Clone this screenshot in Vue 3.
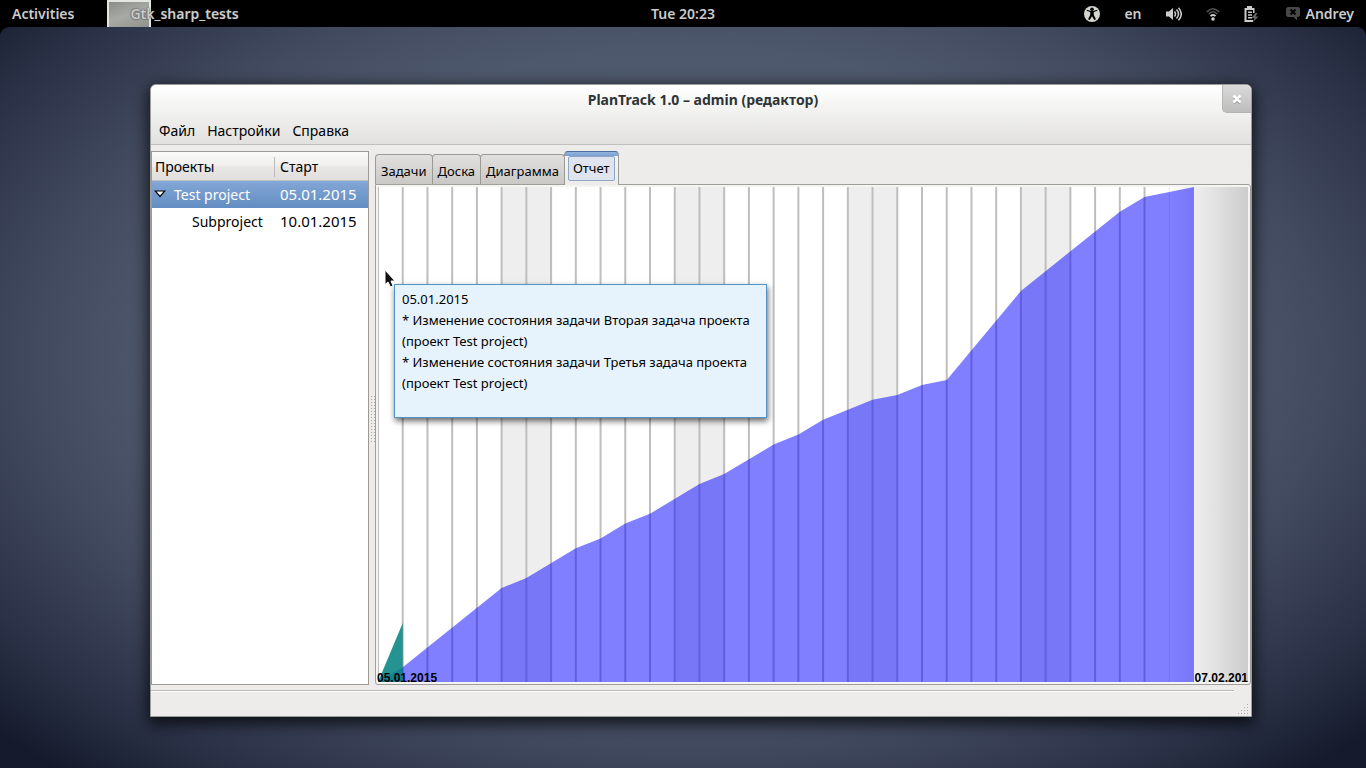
<script setup>
import { ref } from 'vue'

const days = 33
const dayWidth = 816 / days
const chartHeight = 495
const tabs = ['Задачи', 'Доска', 'Диаграмма', 'Отчет']
const active = ref('Отчет')
const menu = ['Файл', 'Настройки', 'Справка']
const weekends = [5, 12, 19, 26]
const lines = Array.from({ length: 32 }, (_, i) => i)
const progress = [
  [0, 0], [1, 3], [5, 19], [6, 21], [8, 27], [9, 29], [10, 32], [11, 34], [13, 40],
  [14, 42], [16, 48], [17, 50], [18, 53], [20, 57], [21, 58], [22, 60], [23, 61],
  [26, 79], [30, 95], [31, 98], [33, 100], [33, 0]
]
const area = progress
  .map(([day, done]) => `${day * dayWidth},${chartHeight - (done * chartHeight) / 100}`)
  .join(' ')
</script>

<template>
  <div class="desktop">
    <header class="panel">
      <button class="panel-item activities">Activities</button>
      <button class="panel-item app-menu">
        <span class="app-icon"></span><span class="app-name">Gtk_sharp_tests</span>
      </button>
      <button class="panel-item clock">Tue 20:23</button>
      <div class="status">
        <button class="panel-item" aria-label="Accessibility">
          <svg width="16" height="16" viewBox="0 0 16 16">
            <circle cx="8" cy="8" r="8" fill="#d3d7cf" />
            <circle cx="8" cy="3.2" r="1.8" />
            <path d="M2.500 4.800 6.200 6 6.200 9 4 13.200 5.700 14 8 10.300 10.300 14 12 13.200 9.800 9 9.800 6 13.500 4.800 13 3.800 9 5H7L3 3.800Z" />
          </svg>
        </button>
        <button class="panel-item">en</button>
        <button class="panel-item" aria-label="Volume">
          <svg width="16" height="16" viewBox="0 0 16 16" fill="none" stroke="#ccc" stroke-width="1.500">
            <path d="M0 5.500h3L7 2v12L3 10.500H0z" fill="#ccc" stroke="none" />
            <path d="M8.500 5.500q2 2.500 0 5M10.500 3.500q4 4.500 0 9M12.500 1.700q5.500 6.300 0 12.600" />
          </svg>
        </button>
        <button class="panel-item" aria-label="Wireless">
          <svg width="14" height="14" viewBox="0 0 14 14" fill="none" stroke="#555" stroke-width="1.700">
            <path d="M.8 5Q7-1.500 13.200 5M2.800 7Q7 2.500 11.200 7" />
            <path d="M4.500 9.200Q7 6.800 9.500 9.200" stroke="#ccc" />
            <circle cx="7" cy="12" r="1.800" fill="#ccc" stroke="none" />
          </svg>
        </button>
        <button class="panel-item" aria-label="Battery">
          <svg width="15" height="16" viewBox="0 0 15 16">
            <path d="M3 0h5v2h2.500v5H9V4H2.500v10H9v2H.5V2H3zM4 5.500h4v1.500H4zM4 8.300h4v1.500H4zM4 11h4v1.500H4z" fill="#ccc" />
            <path d="M11.500 7 7.500 12h3L9 16l5.500-5.500h-3L13.500 7z" fill="#666" />
          </svg>
        </button>
        <button class="panel-item user">
          <svg width="14" height="14" viewBox="0 0 14 14">
            <path d="M1.500 0h11L14 1.500v7L12.500 10H11v3.500L7.500 10h-6L0 8.500v-7z" fill="#484848" />
            <path d="m4.500 2.500 5 5m0-5-5 5" stroke="#000" stroke-width="1.800" />
          </svg>
          <span>Andrey</span>
        </button>
      </div>
    </header>

    <div class="workspace">
      <main class="window">
        <div class="window-top">
          <div class="titlebar">
            <h1>PlanTrack 1.0 – admin (редактор)</h1>
            <button class="close" aria-label="Close">
              <svg width="10" height="10" viewBox="0 0 10 10">
                <path d="m2 3.500 6 6m0-6-6 6" stroke="#888" stroke-width="2" />
                <path d="m1.500 1.500 7 7m0-7-7 7" stroke="#fff" stroke-width="2.500" />
              </svg>
            </button>
          </div>
          <nav class="menubar">
            <button v-for="item in menu" :key="item">{{ item }}</button>
          </nav>
        </div>

        <div class="body">
          <section class="projects">
            <table>
              <thead>
                <tr><th class="name">Проекты</th><th>Старт</th></tr>
              </thead>
              <tbody>
                <tr class="selected">
                  <td class="name">
                    <svg width="12" height="8" viewBox="0 0 12 8">
                      <path d="M1.200 1h9.600L6 6.500z" fill="#fff" stroke="#000" stroke-width="1.200" />
                    </svg>
                    <span>Test project</span>
                  </td>
                  <td class="day">05.01.2015</td>
                </tr>
                <tr><td class="name child">Subproject</td><td class="day">10.01.2015</td></tr>
              </tbody>
            </table>
          </section>
          <div class="handle"><span></span></div>

          <section class="notebook">
            <div class="tabs" role="tablist">
              <button
                v-for="tab in tabs" :key="tab" role="tab" class="tab"
                :class="{ active: tab === active }" :aria-selected="tab === active"
                @click="active = tab"
              ><span>{{ tab }}</span></button>
            </div>
            <div class="page">
              <div class="chart">
                <svg class="plot" viewBox="0 0 870 495" preserveAspectRatio="none">
                  <defs>
                    <linearGradient id="future">
                      <stop offset="0" stop-color="#fff" />
                      <stop offset="1" stop-color="#ccc" />
                    </linearGradient>
                  </defs>
                  <rect width="870" height="495" fill="#fff" />
                  <rect v-for="d in weekends" :key="d" :x="d * dayWidth" y="0" :width="dayWidth * 2" height="495" fill="#eee" />
                  <rect :x="32 * dayWidth" y="0" :width="870 - 32 * dayWidth" height="495" fill="url(#future)" />
                  <path :d="`M${32 * dayWidth} 0v495`" stroke="#e8e8e8" />
                  <path v-for="d in lines" :key="d" :d="`M${d * dayWidth} 0v495`" stroke="#bebebe" stroke-width="2" />
                  <polygon :points="area" fill="#0000ff" fill-opacity=".5" />
                  <polygon :points="`0,495 ${dayWidth},436 ${dayWidth},495`" fill="#008080" fill-opacity=".85" />
                </svg>
                <span class="date start">05.01.2015</span>
                <span class="date end">07.02.201</span>
              </div>
              <svg class="pointer" width="14" height="20" viewBox="0 0 14 20">
                <path d="M1 1v14.500l3-2.500 2.500 5 2.500-1.200L7 12h4z" fill="#111" stroke="#fff" />
              </svg>
              <div class="tooltip" role="tooltip">
                <div>05.01.2015</div>
                <div>* Изменение состояния задачи Вторая задача проекта</div>
                <div>(проект Test project)</div>
                <div>* Изменение состояния задачи Третья задача проекта</div>
                <div>(проект Test project)</div>
              </div>
            </div>
          </section>
        </div>

        <footer class="statusbar">
          <svg width="12" height="12" viewBox="0 0 12 12" fill="#aaa8a5">
            <path d="M9 0h1v1H9zM6 3h1v1H6zM9 3h1v1H9zM3 6h1v1H3zM6 6h1v1H6zM9 6h1v1H9zM0 9h1v1H0zM3 9h1v1H3zM6 9h1v1H6zM9 9h1v1H9z" />
          </svg>
        </footer>
      </main>
    </div>
  </div>
</template>

<style>
body {
  margin: 0;
  background: #000;
}
</style>

<style scoped>
* {
  box-sizing: border-box;
}
.desktop {
  min-height: 100vh;
  display: flex;
  flex-direction: column;
  font: 14px/21px "Noto Sans", "Open Sans", sans-serif;
  color: #000;
}
button {
  font: inherit;
  color: inherit;
  background: none;
  border: 0;
  padding: 0;
  white-space: nowrap;
}
.panel {
  position: relative;
  height: 27px;
  display: flex;
  align-items: center;
  padding: 0 12px;
  background: #000;
  color: #ccc;
  font-weight: 600;
}
.app-menu {
  display: flex;
  align-items: center;
  margin-left: 33px;
}
.app-icon {
  width: 44px;
  height: 27px;
  border: 2px solid #e4e6e2;
  border-bottom: 0;
  background: linear-gradient(160deg, #8a8d88, #a8aaa6 50%, #8d908b);
}
.app-name {
  margin-left: -21px;
  text-shadow: 0 0 2px #222;
}
.clock {
  position: absolute;
  left: 50%;
  transform: translateX(-50%);
}
.status {
  margin-left: auto;
  display: flex;
  align-items: center;
  gap: 24px;
}
.status svg {
  display: block;
}
.user {
  display: flex;
  align-items: center;
  gap: 6px;
  margin-left: 3px;
}
.workspace {
  flex: 1;
  display: flex;
  padding: 57px 114px 51px 150px;
  border-radius: 9px 9px 0 0;
  background: radial-gradient(ellipse at 50% 45%, #5a6579 0%, #4e586c 54%, #424a5f 67%, #2a3146 84%, #151b2c 96%);
}
.window {
  flex: 1;
  min-width: 0;
  display: flex;
  flex-direction: column;
  border: 1px solid #9b9d9b;
  border-radius: 6px 6px 0 0;
  background: #edecea;
  box-shadow: 0 5px 16px 2px rgba(0, 0, 0, .75);
}
.window-top {
  height: 60px;
  border-bottom: 1px solid #bfbfbd;
  border-radius: 5px 5px 0 0;
  background: linear-gradient(#fff, #e2e1df);
}
.titlebar {
  display: flex;
  align-items: flex-start;
  padding-left: 4px;
}
h1 {
  flex: 1;
  margin: 4px -29px 0 0;
  text-align: center;
  font-size: 14px;
  line-height: 21px;
  font-weight: 700;
  color: #2e3436;
}
.close {
  width: 29px;
  height: 28px;
  display: grid;
  place-items: center;
  border: solid #b5b5b5;
  border-width: 0 0 1px 1px;
  border-radius: 0 5px 0 5px;
  background: linear-gradient(#dadada, #bdbdbd);
}
.menubar {
  display: flex;
  gap: 12px;
  padding: 7px 8px 0;
}
.body {
  flex: 1;
  display: flex;
  padding-top: 6px;
}
.projects {
  width: 218px;
  border: 1px solid #9c9a97;
  background: #fff;
}
table {
  width: 100%;
  border-collapse: separate;
  border-spacing: 0;
  table-layout: fixed;
}
th,
td {
  height: 27px;
  padding: 0 0 0 5px;
  font-weight: 400;
  text-align: left;
  white-space: nowrap;
}
th {
  height: 29px;
  padding-top: 1px;
  border-bottom: 1px solid #c4c2bf;
  background: linear-gradient(#fafaf9, #f0efed 48%, #e9e8e6 52%, #dfdedc);
}
th.name {
  padding-left: 3px;
  background: linear-gradient(#bbb, #bbb) right 60% / 1px 20px no-repeat, linear-gradient(#fafaf9, #f0efed 48%, #e9e8e6 52%, #dfdedc);
}
.name {
  width: 123px;
}
.day {
  font-size: 15px;
}
td.name {
  padding-left: 2px;
}
td.name span {
  margin-left: 8px;
}
td svg {
  vertical-align: 2px;
}
td.child {
  padding-left: 40px;
}
.selected {
  background: linear-gradient(#83a7d6, #628dc2);
  color: #fff;
}
.handle {
  width: 6px;
  display: grid;
  place-items: center;
}
.handle span {
  width: 5px;
  height: 47px;
  background: radial-gradient(circle, #aaa 0 1px, transparent 1px) 0 0 / 3px 3px;
}
.notebook {
  flex: 1;
  min-width: 0;
  display: flex;
  flex-direction: column;
}
.tabs {
  height: 33px;
  display: flex;
  align-items: flex-end;
  font-size: 13px;
}
.tab {
  position: relative;
  height: 30px;
  padding: 3px 5px 0;
  margin-right: -1px;
  border: 1px solid #9c9a97;
  border-bottom: 0;
  border-radius: 4px 4px 0 0;
  background: linear-gradient(#e2e1df, #c9c8c5);
}
.tab.active {
  z-index: 1;
  height: 34px;
  margin-bottom: -1px;
  padding: 0 3px;
  border-top-color: #4a6e9e;
  background: linear-gradient(#92b4e0, #7ba0d0 4px, #f5f5f4 4px, #edecea);
}
.tab.active span {
  display: block;
  height: 25px;
  padding: 1px 4px;
  border: 1px solid #8fa5c4;
  border-radius: 2px;
  background: #dfe4ee;
}
.page {
  position: relative;
  flex: 1;
  display: flex;
  padding: 2px;
  border: 1px solid #a09e9b;
  border-radius: 0 3px 3px 3px;
  background: #f4f4f3;
}
.chart {
  position: relative;
  flex: 1;
}
.plot {
  position: absolute;
  width: 100%;
  height: 100%;
}
.date {
  position: absolute;
  bottom: -4px;
  font: 700 12px/15px "Liberation Sans", Arial, sans-serif;
}
.start {
  left: -1px;
}
.end {
  right: 0;
}
.pointer {
  position: absolute;
  left: 8px;
  top: 84px;
}
.tooltip {
  position: absolute;
  left: 18px;
  top: 99px;
  width: 373px;
  height: 134px;
  padding: 4px 7px;
  border: 1px solid #5294c8;
  background: #e6f3fd;
  box-shadow: 1px 3px 6px rgba(0, 0, 0, .6);
  font-size: 13px;
  white-space: nowrap;
}
.statusbar {
  height: 31px;
  display: flex;
  justify-content: flex-end;
  align-items: flex-end;
  padding-right: 1px;
  background: linear-gradient(#bbb9b6, #bbb9b6) 0 5px / calc(100% - 17px) 1px no-repeat, linear-gradient(#fff, #fff) 0 6px / calc(100% - 17px) 1px no-repeat;
}
</style>
